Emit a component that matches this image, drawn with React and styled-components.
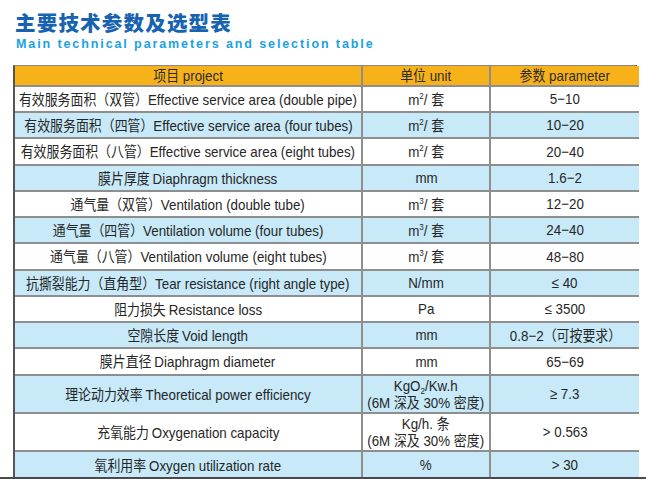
import React from "react";
import styled, { createGlobalStyle } from "styled-components";

const Global = createGlobalStyle`
  html, body { margin: 0; padding: 0; background: #ffffff; }
  body { font-family: "Liberation Sans", "Noto Sans CJK SC", sans-serif; }
`;

const Page = styled.div`
  width: 646px;
  height: 479px;
  overflow: hidden;
  box-sizing: border-box;
  padding: 9px 0 0 0;
  border-bottom: 2px solid #4a4a4a;
`;

const Title = styled.h1`
  margin: 0 0 0 15px;
  font-family: "Noto Sans CJK SC", sans-serif;
  font-weight: 900;
  font-size: 20.5px;
  line-height: 26px;
  letter-spacing: 1.2px;
  color: #1763b0;
`;

const Subtitle = styled.div`
  margin: 2px 0 0 16px;
  font-family: "Liberation Sans", Arial, sans-serif;
  font-weight: 700;
  font-size: 12.5px;
  line-height: 14px;
  letter-spacing: 1.9px;
  color: #19a2e2;
`;

const Table = styled.div`
  margin: 14px 0 0 13px;
  width: 624px;
  display: grid;
  grid-template-columns: 348px 128px 148px;
  border-left: 2px solid #555;
  border-top: 1px solid #8a8a8a;
  border-right: 2px solid #444;
  box-sizing: border-box;
`;

const Cell = styled.div`
  box-sizing: border-box;
  height: ${(p) => p.$h}px;
  display: flex;
  flex-direction: column;
  align-items: center;
  justify-content: center;
  text-align: center;
  background: ${(p) => (p.$head ? "#f8b219" : p.$blue ? "#c7e9f8" : "#ffffff")};
  border-bottom: 2px solid #8e8e8e;
  border-right: ${(p) => (p.$last ? "none" : "2px solid #8e8e8e")};
  font-family: "Liberation Sans", Arial, "Noto Sans CJK SC", sans-serif;
  font-size: 15px;
  line-height: 16px;
  color: ${(p) => (p.$head ? "#2c2c2c" : "#262626")};
  white-space: nowrap;
`;

const Text = styled.span`
  display: inline-block;
  transform: scaleX(0.89);
  transform-origin: center;
`;

const Cjk = styled.span`
  font-family: "Noto Sans CJK SC", sans-serif;
  font-size: 14.5px;
`;

const Line = styled.span`
  display: block;
`;

const Sup = styled.sup`
  font-size: 9px;
  line-height: 0;
  vertical-align: 6px;
`;

const Sub = styled.sub`
  font-size: 9px;
  line-height: 0;
  vertical-align: -3px;
`;

const rows = [
  { cn: "有效服务面积（双管）", en: "Effective service area (double pipe)", unit: <>m<Sup>2</Sup>/ <Cjk>套</Cjk></>, val: "5−10", h: 26 },
  { cn: "有效服务面积（四管）", en: "Effective service area (four tubes)", unit: <>m<Sup>2</Sup>/ <Cjk>套</Cjk></>, val: "10−20", h: 26 },
  { cn: "有效服务面积（八管）", en: "Effective service area (eight tubes)", unit: <>m<Sup>2</Sup>/ <Cjk>套</Cjk></>, val: "20−40", h: 27 },
  { cn: "膜片厚度 ", en: "Diaphragm thickness", unit: "mm", val: "1.6−2", h: 26 },
  { cn: "通气量（双管）", en: "Ventilation (double tube)", unit: <>m<Sup>3</Sup>/ <Cjk>套</Cjk></>, val: "12−20", h: 26 },
  { cn: "通气量（四管）", en: "Ventilation volume (four tubes)", unit: <>m<Sup>3</Sup>/ <Cjk>套</Cjk></>, val: "24−40", h: 26 },
  { cn: "通气量（八管）", en: "Ventilation volume (eight tubes)", unit: <>m<Sup>3</Sup>/ <Cjk>套</Cjk></>, val: "48−80", h: 27 },
  { cn: "抗撕裂能力（直角型）", en: "Tear resistance (right angle type)", unit: "N/mm", val: "≤ 40", h: 26 },
  { cn: "阻力损失 ", en: "Resistance loss", unit: "Pa", val: "≤ 3500", h: 26 },
  { cn: "空隙长度 ", en: "Void length", unit: "mm", val: <>0.8−2<Cjk>（可按要求）</Cjk></>, h: 26 },
  { cn: "膜片直径 ", en: "Diaphragm diameter", unit: "mm", val: "65−69", h: 27 },
  {
    cn: "理论动力效率 ",
    en: "Theoretical power efficiency",
    unit: (
      <>
        <Line>KgO<Sub>2</Sub>/Kw.h</Line>
        <Line>(6M <Cjk>深及</Cjk> 30% <Cjk>密度</Cjk>)</Line>
      </>
    ),
    val: "≥ 7.3",
    h: 38,
  },
  {
    cn: "充氧能力 ",
    en: "Oxygenation capacity",
    unit: (
      <>
        <Line>Kg/h. <Cjk>条</Cjk></Line>
        <Line>(6M <Cjk>深及</Cjk> 30% <Cjk>密度</Cjk>)</Line>
      </>
    ),
    val: "> 0.563",
    h: 38,
  },
  { cn: "氧利用率 ", en: "Oxygen utilization rate", unit: "%", val: "> 30", h: 28 },
];

export default function App() {
  return (
    <>
      <Global />
      <Page>
        <Title>主要技术参数及选型表</Title>
        <Subtitle>Main technical parameters and selection table</Subtitle>
        <Table>
          <Cell $head $h={21}><Text><Cjk>项目</Cjk> project</Text></Cell>
          <Cell $head $h={21}><Text><Cjk>单位</Cjk> unit</Text></Cell>
          <Cell $head $last $h={21}><Text><Cjk>参数</Cjk> parameter</Text></Cell>
          {rows.map((r, i) => {
            const blue = i % 2 === 1;
            return (
              <React.Fragment key={i}>
                <Cell $blue={blue} $h={r.h}><Text><Cjk>{r.cn}</Cjk>{r.en}</Text></Cell>
                <Cell $blue={blue} $h={r.h}><Text>{r.unit}</Text></Cell>
                <Cell $blue={blue} $last $h={r.h}><Text>{r.val}</Text></Cell>
              </React.Fragment>
            );
          })}
        </Table>
      </Page>
    </>
  );
}
